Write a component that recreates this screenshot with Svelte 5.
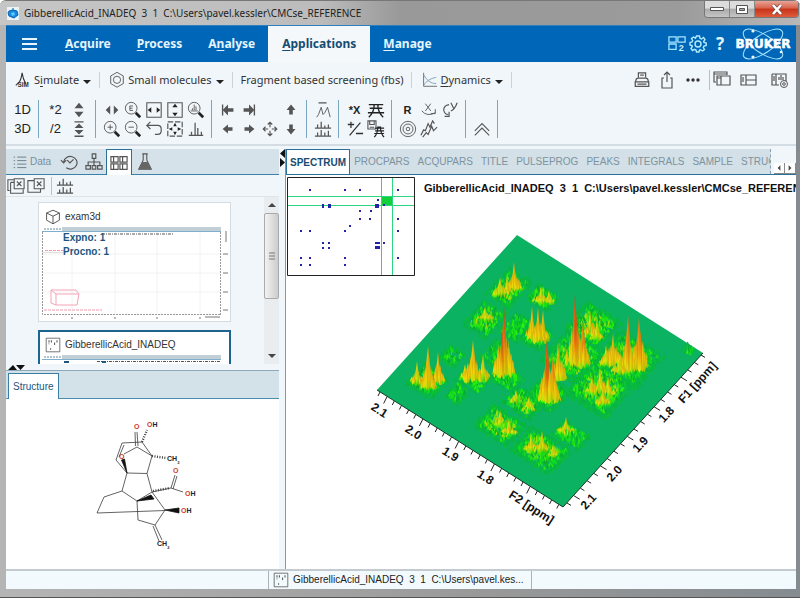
<script>
  const icons = {
    sim: '<path d="M2 16L6 12Q8 9 9 2Q10 9 13 14" stroke="#333" stroke-width="1.2"/><text x="4" y="18" font-family="Liberation Sans" font-size="7" font-weight="700" fill="#333" stroke="none">SIM</text>',
    hexagon: '<path d="M10 1.5L17 5.5V14L10 18L3 14V5.5Z"/><circle cx="10" cy="9.8" r="4"/>',
    dynamics: '<path d="M4 2V17H19" stroke="#666"/><path d="M4 4Q9 14 18 14" stroke="#7ba0b4"/><path d="M4 16Q8 9 18 7" stroke="#7ba0b4"/>',
    print: '<path d="M6 7V2H14V7M8 4.500H12M3 12Q3 8 6 8H14Q17 8 17 12M2.500 12H17.500V17H2.500ZM5 14.500H15" stroke-width="1.4"/>',
    share: '<path d="M7 8H5V18H15V8H13M10 12V2M7 5L10 2L13 5" stroke-width="1.2"/>',
    more: '<g fill="#333" stroke="none"><circle cx="5" cy="10" r="1.700"/><circle cx="10" cy="10" r="1.700"/><circle cx="15" cy="10" r="1.700"/></g>',
    windows: '<path d="M4 12H2V2H15V5M2 4H15M5 6H18V15H5ZM9 6V15M5 8H9" stroke-width="1.2"/>',
    layout: '<path d="M3 5H18V15H3ZM8 5V15M8 10H18M5 7V12" stroke-width="1.2"/>',
    layoutset: '<path d="M2 4H16V11M2 4V15H9M6 4V15M9 10V7M11 10V5M13 10V7M4 6V11" stroke-width="1.2"/><circle cx="14" cy="14" r="3.500"/><circle cx="14" cy="14" r="1.300"/>',
    updown: '<g fill="#555" stroke="none"><path d="M10 2L15 8H5ZM5 12H15L10 18Z"/></g>',
    upline: '<path d="M5 2H15M5 18H15" stroke-width="1.5"/><g fill="#555" stroke="none"><path d="M10 4L15 9H5ZM5 11H15L10 16Z"/></g>',
    leftright: '<path d="M8 5V15L3 10ZM12 5V15L17 10Z" fill="#555" stroke="none"/>',
    zoome: '<circle cx="8" cy="8" r="6.500"/><path d="M13 13L18 18" stroke="#222" stroke-width="3"/><path d="M10 5.500H6.500V10.500H10M6.500 8H9.500"/>',
    zoomin: '<circle cx="8" cy="8" r="6.500"/><path d="M13 13L18 18" stroke="#222" stroke-width="3"/><path d="M5 8H11M8 5V11"/>',
    zoomout: '<circle cx="8" cy="8" r="6.500"/><path d="M13 13L18 18" stroke="#222" stroke-width="3"/><path d="M5 8H11"/>',
    zoomspec: '<circle cx="8" cy="8" r="6.500"/><path d="M13 13L18 18" stroke="#222" stroke-width="3"/><path d="M4 11H12M6 10V8M8 10V4M10 10V6"/>',
    fitx: '<path d="M2 2H18V18H2Z" stroke-width="1.2"/><path d="M3 10L7 7V13ZM17 10L13 7V13Z" fill="#222" stroke="none"/>',
    fity: '<path d="M2 2H18V18H2Z" stroke-width="1.2"/><path d="M10 3L7 7H13ZM10 17L7 13H13Z" fill="#222" stroke="none"/>',
    fitall: '<path d="M2 2H18V18H2Z" stroke-dasharray="6 2" stroke-width="1.3"/><path d="M10 3L8 7H12ZM10 17L8 13H12ZM3 10L7 8V12ZM17 10L13 8V12Z" fill="#222" stroke="none"/>',
    undo: '<path d="M6 2L2 6L6 10M2 6H14Q18 6 18 10V12Q18 16 14 16H11" stroke-width="1.3"/>',
    baseline: '<path d="M2 17H18M5 17V13M9 17V3M12 17V9M16 17V13" stroke-width="1.4"/>',
    first: '<path d="M4 4V16" stroke-width="1.5"/><path d="M4 10L10 4V8H16V12H10V16Z" fill="#555" stroke="none"/>',
    last: '<path d="M16 4V16" stroke-width="1.5"/><path d="M16 10L10 4V8H4V12H10V16Z" fill="#555" stroke="none"/>',
    left: '<path d="M4 10L10 5V8H15V12H10V15Z" fill="#555" stroke="none"/>',
    right: '<path d="M16 10L10 5V8H5V12H10V15Z" fill="#555" stroke="none"/>',
    up: '<path d="M10 4L15 10H12V15H8V10H5Z" fill="#555" stroke="none"/>',
    down: '<path d="M10 16L15 10H12V5H8V10H5Z" fill="#555" stroke="none"/>',
    move: '<path d="M10 8V3M10 12V17M8 10H3M12 10H17M7.500 5L10 2.500L12.500 5M7.500 15L10 17.500L12.500 15M5 7.500L2.500 10L5 12.500M15 7.500L17.500 10L15 12.500" stroke-width="1.3"/>',
    peaks: '<path d="M5 2H14" stroke-width="1.400"/><path d="M3 18L5 15L8 7L10 15L12 13L15 7L18 18"/>',
    stack: '<path d="M1 9H19M1 18H19M4 9V5M8 9V2M12 9V6M16 9V5M4 18V14M8 18V11M12 18V14M16 18V12" stroke-width="1.4"/>',
    slices: '<path d="M2 4H18M3 8H17M1 13H19M2 18Q8 13 8 4H12Q12 13 18 18" stroke="#222" stroke-width="1.5"/>',
    plusminus: '<path d="M2 5H9M5.500 2V9M4 17L16 3M11 15H19" stroke-width="1.4" stroke="#333"/>',
    saveslices: '<path d="M1 1H10V10H1ZM3 1V5H8V1M3 8H8" stroke-width="1.2"/><path d="M9 9H19M9 12H19M8 15H19M8 19Q12 15 12 8H15Q15 15 19 19" stroke="#222" stroke-width="1.3"/>',
    rotx: '<path d="M6 3L12 11M12 3L6 11M2 11Q8 18 17 13M17 9V14H12"/>',
    roty: '<path d="M9 4Q3 5 3 10Q4 15 8 15M4 17H9V12M11 2L14 8M18 2Q15 10 11 11" stroke-width="1.3"/>',
    contour: '<circle cx="10" cy="10" r="8.500"/><circle cx="10" cy="10" r="5.500"/><circle cx="10" cy="10" r="2"/>',
    fids: '<path d="M1 17L4 11L6 12L9 4L11 8L14 1L16 4M3 19L7 14L9 16L13 7L15 12L19 8" stroke-width="1.3"/>',
    collapse: '<path d="M2 12L10 4L18 12M2 17L10 9L18 17" stroke-width="1.2"/>',
    list: '<path d="M1 3H3M1 8H3M1 13H3M1 18H3M6 3H19M6 8H19M6 13H19M6 18H19" stroke="#6f7f88" stroke-width="1.4"/>',
    history: '<path d="M4 10A7.500 7 0 1 1 7 16.500M1 8L4 11L7 8M8 8L11 11L15 7" stroke-width="1.3"/>',
    tree: '<path d="M8 1H12V6H8ZM1 14H6V18H1ZM8 14H12V18H8ZM14 14H19V18H14ZM10 6V14M3.500 14V10H16.500V14" stroke-width="1.3"/>',
    tiles: '<path d="M1 3H9V9H1ZM11 3H19V9H11ZM1 11H9V17H1ZM11 11H19V17H11ZM4 3V9M14 3V9M4 11V17M14 11V17" stroke-width="1.3"/>',
    flask: '<path d="M7 1H13M8 1V8L3 18H17L12 8V1" stroke-width="1.2"/><path d="M7 10H13L17 18H3Z" fill="#666" stroke="none"/>',
    closeall: '<path d="M3 15H1V3H8M4 6V18H18V14M4 6H8M8 2H19V13H8ZM11 5L16 10M16 5L11 10" stroke-width="1.2"/>',
    closeone: '<path d="M8 4H1V17H15V13M8 2H19V13H8ZM11 5L16 10M16 5L11 10" stroke-width="1.2"/>',
    cube: '<path d="M10 1.500L18 5V14L10 18.500L2 14V5ZM2 5L10 9L18 5M10 9V18.500" stroke-width="1.2"/>',
    dots: '<path d="M1.500 1.500H18.500V18.500H1.500Z"/><path d="M5 4V9M8 4V8M12 7V11M15 4V8M7 14V16" stroke-width="1.3" stroke-dasharray="3 1"/>',
    grid2: '<path d="M1 2H9V8H1ZM11 2H19V8H11ZM1 10H9V16H1Z" stroke="#a5e6ff" stroke-width="1.4"/><text x="12" y="18" font-family="Liberation Sans" font-size="10" font-weight="700" fill="#c8efff" stroke="none">2</text>',
    gear: '<circle cx="10" cy="10" r="3" stroke="#b5ecff" stroke-width="1.4"/><path d="M8.500 2H11.500L12 4.300L13.500 5L15.500 3.500L17 5.500L15.600 7.500L16 8.500L18.200 9V11.500L16 12L15.300 13.500L16.500 15.500L14.500 17L12.500 15.700L11.500 16L11 18H8.500L8 16L6.500 15.300L4.500 16.500L3 14.500L4.300 12.500L4 11.500L2 11V8.500L4 8L4.700 6.500L3.500 4.500L5.500 3L7.500 4.300Z" stroke="#b5ecff" stroke-width="1.4"/>'
  };

  const menus = [['A', 'cquire', ''], ['P', 'rocess', ''], ['n', 'alyse', 'A'], ['A', 'pplications', ''], ['M', 'anage', '']];

  const groups = [
    [['t', '1D'], ['t', '3D']],
    [['t', '*2'], ['t', '/2'], ['i', 'updown'], ['i', 'upline']],
    ['leftright', 'zoomin', 'zoome', 'zoomout', 'fitx', 'undo', 'fity', 'fitall', 'zoomspec', 'baseline'].map((n) => ['i', n]),
    ['first', 'left', 'last', 'right', '', 'move', 'up', 'down'].map((n) => ['i', n]),
    [['i', 'peaks'], ['i', 'stack']],
    [['b', '*X'], ['i', 'plusminus'], ['i', 'slices'], ['i', 'saveslices']],
    [['b', 'R'], ['i', 'contour'], ['i', 'rotx'], ['i', 'fids'], ['i', 'roty']],
    [['i', ''], ['i', 'collapse']]
  ];

  const tabs = ['SPECTRUM', 'PROCPARS', 'ACQUPARS', 'TITLE', 'PULSEPROG', 'PEAKS', 'INTEGRALS', 'SAMPLE', 'STRUCTURE'];
  let active = $state('SPECTRUM');

  const mapDots = [
    [22, 12], [57, 12], [72, 12], [110, 12], [90, 22], [96, 27], [72, 33], [83, 33], [72, 41], [82, 41],
    [110, 41], [62, 48], [13, 53], [22, 53], [57, 53], [110, 53], [35, 65], [41, 65], [96, 65], [35, 70],
    [41, 70], [13, 80], [22, 80], [57, 80], [110, 80], [13, 87], [22, 87], [57, 87]
  ];

  let seed = 7;
  const rnd = () => {
    seed = (seed * 16807) % 2147483647;
    return seed / 2147483647;
  };

  // noise patches: centre x, centre y, half extent along F2, half extent along F1, lightness
  const patches = [
    [509, 287, 14, 18, 1], [543, 296, 13, 10, 1], [485, 318, 14, 17, 1], [516, 326, 11, 14, 0], [537, 335, 12, 12, 0],
    [428, 380, 15, 14, 0], [474, 377, 14, 12, 0], [452, 355, 9, 9, 0], [458, 392, 8, 10, 0], [496, 352, 10, 13, 0],
    [507, 377, 14, 10, 0], [592, 325, 20, 20, 1], [574, 356, 24, 22, 1], [628, 358, 26, 23, 1], [600, 387, 25, 24, 1],
    [548, 392, 16, 16, 0], [523, 401, 17, 12, 1], [500, 424, 20, 15, 1], [541, 449, 24, 17, 1], [571, 434, 16, 10, 0],
    [689, 348, 5, 4, 0]
  ];
  // signal clusters: x, tip y, base y, half width
  const signals = [
    [514, 262, 291, 7], [500, 277, 296, 9], [507, 277, 294, 6], [541, 286, 303, 8], [549, 290, 303, 5], [485, 306, 321, 8],
    [504, 307, 377, 10], [532, 306, 340, 6], [538, 307, 343, 7], [543, 310, 340, 5], [575, 294, 366, 9], [583, 322, 366, 7],
    [590, 311, 336, 6], [597, 319, 340, 6], [417, 361, 384, 6], [428, 346, 389, 7], [438, 352, 383, 6], [473, 340, 382, 9],
    [483, 354, 380, 6], [465, 364, 378, 5], [558, 342, 379, 8], [547, 337, 402, 8], [553, 355, 402, 6], [613, 333, 366, 12],
    [606, 345, 366, 7], [628, 315, 372, 7], [639, 317, 370, 9], [620, 352, 374, 8], [600, 368, 392, 8], [592, 376, 394, 7],
    [608, 376, 396, 7], [603, 386, 405, 7], [516, 390, 402, 6], [529, 396, 410, 6], [500, 410, 425, 7], [509, 418, 434, 8],
    [531, 433, 451, 7], [542, 431, 452, 8], [553, 444, 456, 6], [566, 417, 434, 9]
  ];

  const spikes = [];
  for (const [cx, cy, a, b, light] of patches) {
    for (let i = 0; i < a * b * 1.1; i++) {
      const u = (rnd() * 2 - 1) * a;
      const v = (rnd() * 2 - 1) * b;
      const edge = Math.max(Math.abs(u) / a, Math.abs(v) / b);
      const g = edge > 0.8 ? ['#09b444', '#0abd3a'] : light && edge < 0.6 ? ['#16dc18', '#6be712', '#37e510', '#0fa928', '#a0dd10', '#12c41c'] : ['#0ac732', '#12dd1c', '#0aac32', '#2cef0c'];
      spikes.push({ x: cx + u * 0.85 - v * 0.67, y: cy + u * 0.54 + v * 0.74 + 3, h: 3 + rnd() * 4 * (1.3 - edge), w: 1 + rnd() * 1.2, f: g[Math.floor(rnd() * g.length)] });
    }
  }
  for (const [cx, top, base, w] of signals) {
    const h = base - top;
    const tone = h > 58 ? 'url(#hot)' : h > 43 ? 'url(#warm)' : h > 28 ? 'url(#mid)' : 'url(#low)';
    for (let i = 0; i < w * 3; i++) {
      const d = rnd() * 2 - 1;
      const k = Math.pow(1 - Math.abs(d), 1.1) * (0.6 + rnd() * 0.4) * 0.65 + 0.2;
      spikes.push({ x: cx + d * w, y: base - Math.abs(d) * 2 + rnd() * 3, h: h * k, w: 1.5 + rnd() * 1.3, f: k > 0.6 ? tone : h * k > 9 ? 'url(#mid)' : 'url(#low)', s: 1 });
    }
    spikes.push({ x: cx, y: base, h, w: h > 40 ? 4.5 : 3, f: tone, s: 1 });
  }
  spikes.sort((p, q) => p.y - q.y);

  const f2Ticks = Array.from({ length: 26 }, (_, i) => ({ x: 380 + i * 7.15, y: 392 + i * 4.5, l: i % 5 === 1 ? 7 : 4 }));
  const f1Ticks = Array.from({ length: 21 }, (_, i) => ({ x: 567 + i * 6.7, y: 503 - i * 7.4, l: i % 4 === 1 ? 6 : 4 }));
  const axisLabels = [
    [379, 411, 33, '2.1'], [413, 433, 33, '2.0'], [450, 455, 33, '1.9'], [485, 478, 33, '1.8'], [531, 508, 33, 'F2 [ppm]'],
    [589, 502, -48, '2.1'], [615, 474, -48, '2.0'], [641, 445, -48, '1.9'], [667, 415, -48, '1.8'], [698, 383, -48, 'F1 [ppm]']
  ];
</script>

{#snippet icon(name, size = 20)}
  <svg class="icon" width={size} height={size} viewBox="0 0 20 20" fill="none" stroke="#555" aria-hidden="true">{@html icons[name] ?? ''}</svg>
{/snippet}

<div class="window">
  <header class="titlebar">
    <svg width="12" height="13" viewBox="0 0 12 13" aria-hidden="true"><path d="M0 0H12V13H0Z" fill="#e9f3fa"/><path d="M6 1V4M2 4L6 3L10 4L11 8L7 11L2 9L1 6Z" fill="#168be0" stroke="#0b63ac"/><path d="M4 6L7 5L8 8L5 9Z" fill="#60c8ff"/></svg>
    <span class="caption">GibberellicAcid_INADEQ&nbsp; 3&nbsp; 1&nbsp; C:\Users\pavel.kessler\CMCse_REFERENCE</span>
    <div class="winbtns">
      <button aria-label="Minimize"><svg width="14" height="6" viewBox="0 0 14 6"><path d="M.5 1.500H13.500V4.500H.5Z" fill="#fff" stroke="#555"/></svg></button>
      <button aria-label="Maximize"><svg width="14" height="11" viewBox="0 0 14 11"><path d="M1.500 1.500H12.500V9.500H1.500Z" fill="#fff" stroke="#555"/><path d="M4.500 4.500H9.500V6.500H4.500Z" fill="#aaa" stroke="#555"/></svg></button>
      <button class="close" aria-label="Close"><svg width="12" height="11" viewBox="0 0 12 11"><path d="M2 1L10 10M10 1L2 10" stroke="#7b4a45" stroke-width="4"/><path d="M2 1L10 10M10 1L2 10" stroke="#fff" stroke-width="2.600"/></svg></button>
    </div>
  </header>

  <div class="app">
    <nav class="menubar">
      <button class="burger" aria-label="Menu"><svg width="16" height="14" viewBox="0 0 16 14"><path d="M0 2H15M0 7H15M0 12H15" stroke="#e8f6ff" stroke-width="2"/></svg></button>
      {#each menus as [key, rest, lead], i}
        {#if lead}
          <button>{lead}<u>{key}</u>{rest}</button>
        {:else}
          <button class:on={i === 3}><u>{key}</u>{rest}</button>
        {/if}
      {/each}
      <div class="tools">
        <button aria-label="Arrange windows">{@render icon('grid2', 18)}</button>
        <button aria-label="Settings">{@render icon('gear')}</button>
        <button class="help" aria-label="Help">?</button>
        <svg width="62" height="34" viewBox="0 0 62 34" fill="none" stroke="#a9e4ff" role="img" aria-label="Bruker">
          <ellipse cx="31" cy="17" rx="23" ry="9" transform="rotate(34 31 17)"/>
          <ellipse cx="31" cy="17" rx="23" ry="9" transform="rotate(-34 31 17)"/>
          <g fill="#e6f7ff" stroke="none"><circle cx="21" cy="4" r="1.600"/><circle cx="21" cy="30" r="1.600"/><circle cx="49" cy="25" r="1.300"/></g>
          <text x="31" y="21" text-anchor="middle" font-family="DejaVu Sans" font-size="12" font-weight="700" fill="#fff" stroke="#fff" stroke-width=".5">BRUKER</text>
        </svg>
      </div>
    </nav>

    <div class="ribbon">
      <button class="rb">{@render icon('sim', 18)}<span>S<u>i</u>mulate</span><i class="caret"></i></button>
      <button class="rb">{@render icon('hexagon', 18)}<span>Small molecules</span><i class="caret"></i></button>
      <button class="rb">Fragment based screening (fbs)</button>
      <button class="rb">{@render icon('dynamics', 18)}<span><u>D</u>ynamics</span><i class="caret"></i></button>
      <div class="rtools">
        <button aria-label="Print">{@render icon('print', 18)}</button>
        <button aria-label="Export">{@render icon('share')}</button>
        <button aria-label="More">{@render icon('more')}</button>
        <button class="split" aria-label="Windows">{@render icon('windows')}</button>
        <button aria-label="Layout">{@render icon('layout')}</button>
        <button class="last" aria-label="Layout settings">{@render icon('layoutset')}</button>
      </div>
    </div>

    <div class="toolbar">
      {#each groups as g, gi}
        <div class="group" class:wide={gi === 1}>
          {#each g as [kind, v]}
            {#if v === ''}
              <span></span>
            {:else if kind === 'i'}
              <button aria-label={v}>{@render icon(v)}</button>
            {:else}
              <button class:bold={kind === 'b'}>{v}</button>
            {/if}
          {/each}
        </div>
      {/each}
    </div>

    <div class="body">
      <aside>
        <div class="sidetabs">
          <button class="data">{@render icon('list', 14)}Data</button>
          <button aria-label="History">{@render icon('history', 18)}</button>
          <button aria-label="Groups">{@render icon('tree', 18)}</button>
          <button class="on" aria-label="Datasets">{@render icon('tiles', 18)}</button>
          <button aria-label="Samples">{@render icon('flask', 18)}</button>
        </div>
        <div class="sidetools">
          <button aria-label="Close all">{@render icon('closeall', 18)}</button>
          <button aria-label="Close">{@render icon('closeone', 18)}</button>
          <button class="split" aria-label="Stack spectra">{@render icon('stack', 18)}</button>
        </div>
        <div class="browser">
          <div class="cards">
            <article class="card">
              <h2>{@render icon('cube', 16)}exam3d</h2>
              <svg width="100%" viewBox="0 0 188 92" fill="none" aria-label="exam3d preview">
                <path d="M0 0H179V4H0Z" fill="#c3cfd6"/><path d="M0 0H20V4H0Z" fill="#fff"/>
                <path d="M2 2H19" stroke="#6b8797" stroke-dasharray="2 1"/>
                <path d="M0 4.500H179" stroke="#7eb0ce"/>
                <path d="M30 5V87M73 5V87M115 5V87M158 5V87M0 27H178M0 46H178M0 65H178" stroke="#f2f2f4"/>
                <path d="M178.500 5V88M.5 5V87.500H179" stroke="#999" stroke-dasharray="2 1"/>
                <path d="M60 7H131" stroke="#555" stroke-dasharray="3 1 1 1"/>
                <path d="M3 23.500H22M2 83H60" stroke="#f09aaa" stroke-dasharray="3 1"/>
                <path d="M0 25.500H24" stroke="#e0e0e0"/>
                <path d="M9 63L14 67V78H35L37 67L34 63ZM9 63V76L14 78M14 67H37" stroke="#f5a3b3"/>
                <path d="M181 27H186M181 46H186M181 65H186M181 83H186M29 91H31M72 91H74M114 91H116M157 91H159M163 90H178M184 4V15" stroke="#777"/>
                <text x="21" y="14">Expno: 1</text>
                <text x="21" y="28">Procno: 1</text>
              </svg>
            </article>
            <article class="card on">
              <h2>{@render icon('dots', 16)}GibberellicAcid_INADEQ</h2>
              <svg width="100%" viewBox="0 0 188 92" fill="none" aria-label="GibberellicAcid_INADEQ preview">
                <path d="M0 0H179V4H0Z" fill="#c3cfd6"/><path d="M0 0H20V4H0Z" fill="#fff"/>
                <path d="M2 2H19" stroke="#6b8797" stroke-dasharray="2 1"/>
                <path d="M0 4.500H179" stroke="#7eb0ce"/>
                <path d="M55 6.500H178" stroke="#555" stroke-dasharray="3 1 1 1"/>
                <path d="M22 7H27M60 7H64" stroke="#1c5680" stroke-width="2"/>
              </svg>
            </article>
          </div>
          <div class="scroll">
            <button aria-label="Scroll up"><i class="tri up"></i></button>
            <div class="thumb"><svg width="6" height="8" viewBox="0 0 6 8"><path d="M0 1H6M0 4H6M0 7H6" stroke="#777"/></svg></div>
            <button class="end" aria-label="Scroll down"><i class="tri"></i></button>
          </div>
        </div>
        <div class="hsplit"><svg width="18" height="5" viewBox="0 0 18 5"><path d="M0 5L5 0L9 5ZM8 0H17L12.500 5Z" fill="#111"/></svg></div>
        <div class="structtabs"><button>Structure</button></div>
        <div class="structure">
          <svg viewBox="80 400 140 160" width="140" height="160" fill="none" stroke="#3c3c3c" stroke-width=".8" role="img" aria-label="Gibberellic acid structure">
            <path d="M138 447L137 433M135.500 447L135 433M137 448L124 455M137 448L152 457M152 457L142 443L122 444L116 461L127 474L147 474.500L152 457M124 446L119 458M147 474.500L152 493M127 474L122 492L137 502L152 493L171 489M122 492L104 498L97 514L165 511.500M152 493L165 511L155 526L138 521L137 502M155 526L162 541M153 527L159 542M171 489L175 476M173 490L177 477M171 489L183 493"/>
            <path d="M127 474L121.500 461L124.500 460Z M137 502L151 496L154 500ZM165 511L179 509V514Z" fill="#111" stroke="#111"/>
            <path d="M142 443L147 431M152 457L166 459M153 492L170 489" stroke-dasharray="1 1.500" stroke-width="2.400"/>
            <g font-family="Liberation Sans" font-size="7" font-weight="700" fill="#222" stroke="none">
              <text x="134" y="430" class="o">O</text><text x="147" y="428"><tspan class="o">O</tspan>H</text>
              <text x="119" y="460" class="o">O</text><text x="167" y="462">CH<tspan dy="3" font-size="4">3</tspan></text>
              <text x="173" y="474" class="o">O</text><text x="185" y="497"><tspan class="o">O</tspan>H</text>
              <text x="181" y="514"><tspan class="o">O</tspan>H</text><text x="157" y="547">CH<tspan dy="3" font-size="4">2</tspan></text>
            </g>
          </svg>
        </div>
      </aside>

      <div class="vsplit"><svg width="5" height="18" viewBox="0 0 5 18"><path d="M5 0V9L0 4.500ZM0 9V18L5 13.500Z" fill="#111"/></svg></div>

      <main>
        <div class="tabbar">
          <div class="tabs">
            {#each tabs as t}
              <button class:on={active === t} onclick={() => (active = t)}>{t}</button>
            {/each}
          </div>
          <div class="tabnav"><button aria-label="Previous tabs"><i class="tri l"></i></button><button aria-label="Next tabs"><i class="tri r"></i></button></div>
        </div>
        <div class="plot">
          <svg class="surface" viewBox="286 175 510 392" width="510" height="392" role="img" aria-label="3D spectrum surface">
            <defs>
              <linearGradient id="hot" x2="0" y2="1"><stop offset="0" stop-color="#c24a1c"/><stop offset=".45" stop-color="#ef7012"/><stop offset=".7" stop-color="#f0b00c"/><stop offset="1" stop-color="#d5ec08"/></linearGradient>
              <linearGradient id="warm" x2="0" y2="1"><stop offset="0" stop-color="#dc7a14"/><stop offset=".5" stop-color="#f0a010"/><stop offset="1" stop-color="#e4ee0a"/></linearGradient>
              <linearGradient id="mid" x2="0" y2="1"><stop offset="0" stop-color="#e2b014"/><stop offset=".6" stop-color="#f2d408"/><stop offset="1" stop-color="#a8ea0c"/></linearGradient>
              <linearGradient id="low" x2="0" y2="1"><stop offset="0" stop-color="#d8cb1a"/><stop offset=".5" stop-color="#ceec0c"/><stop offset="1" stop-color="#30e410"/></linearGradient>
            </defs>
            <path d="M517 235L703 353L563 507L377 390Z" fill="#0bb261"/>
            {#each spikes as s}
              <path d="M{s.x - s.w} {s.y}L{s.x} {s.y - s.h}L{s.x + s.w} {s.y}Z" fill={s.f} />
              {#if s.s}<path d="M{s.x} {s.y - s.h}L{s.x + s.w} {s.y}H{s.x + s.w * 0.2}Z" fill="#8c5a00" opacity=".25" />{/if}
            {/each}
            <path d="M377 390L563 507L703 353" fill="none" stroke="#143c28"/>
            {#each f2Ticks as t}<path d="M{t.x} {t.y}l{-t.l * 0.5} {t.l}" stroke="#222" />{/each}
            {#each f1Ticks as t}<path d="M{t.x} {t.y}l{t.l} {t.l * 0.6}" stroke="#222" />{/each}
            {#each axisLabels as [x, y, r, t]}
              <text class="axis" transform="translate({x} {y}) rotate({r})">{t}</text>
            {/each}
          </svg>
          <div class="plothead">
            <svg class="map" width="128" height="99" viewBox="0 0 128 99" aria-label="Overview map">
              <path d="M.5.500H127.500V98.500H.5Z" fill="#fff" stroke="#222"/>
              <path d="M1 19.500H127M1 28.500H127M94.500 1V98M105.500 1V98" stroke="#2ed682"/>
              <path d="M95 20H105V28H95Z" fill="#12cf3e"/>
              {#each mapDots as [x, y]}<path d="M{x} {y}h2v2h-2z" fill="#2323a8" />{/each}
              <path d="M35 27h2v4h-2zM41 27h3v4h-3zM88 27h4v4h-4zM88 65h5v2h-5zM88 69h5v3h-5z" fill="#2323a8"/>
            </svg>
            <h1>GibberellicAcid_INADEQ&nbsp; 3&nbsp; 1&nbsp; C:\Users\pavel.kessler\CMCse_REFERENCE</h1>
          </div>
        </div>
      </main>
    </div>

    <footer>
      <button>{@render icon('dots', 16)}<span>GibberellicAcid_INADEQ&nbsp; 3&nbsp; 1&nbsp; C:\Users\pavel.kes...</span></button>
    </footer>
  </div>
</div>

<style>
  :global(body) { margin: 0; }
  .window, .window * { box-sizing: border-box; }
  .window { min-height: 100vh; display: flex; flex-direction: column; padding: 0 4px 8px 6px; background: linear-gradient(90deg, #b5b5b5, #999 60%, #858b90); font: 10px/14px "Liberation Sans", Arial, sans-serif; color: #333; border-radius: 6px 6px 0 0; overflow: hidden; border-top: 1px solid #777; border-bottom: 1px solid #555; }
  button { border: 0; padding: 0; margin: 0; background: none; font: inherit; color: inherit; display: flex; align-items: center; justify-content: center; white-space: nowrap; flex: none; }
  svg { display: block; flex: none; }

  .titlebar { height: 24px; display: flex; align-items: center; gap: 5px; background: linear-gradient(90deg, #c6c6c6, #bcbcbc 40%, #999 50%, #9b9b9b 85%, #b8b8b8); margin: 0 -4px 0 -6px; padding: 0 1px 0 7px; }
  .caption { flex: 1; font: 10px/16px "Noto Sans", sans-serif; color: #222; white-space: nowrap; overflow: hidden; }
  .winbtns { display: flex; align-self: flex-start; border: 1px solid #777; border-top: 0; border-radius: 0 0 4px 4px; overflow: hidden; }
  .winbtns button { width: 25px; height: 16px; background: linear-gradient(#dcdcdc 45%, #aaa 50%, #c5c5c5); border-right: 1px solid #888; }
  .winbtns .close { width: 43px; border: 0; background: linear-gradient(#e6a595, #d9604a 45%, #c8331a 50%, #e05c3a); }

  .app { flex: 1; display: flex; flex-direction: column; background: #f1f6fa; min-width: 0; }
  .menubar { height: 37px; background: #0067b8; display: flex; align-items: stretch; color: #e4f5fe; font: 700 12px/18px "Noto Sans", sans-serif; border-top: 1px solid #2c7fc0; }
  .menubar > button { padding: 0 13px; }
  .menubar > .burger { padding: 0 14px 0 16px; }
  .menubar > .on { background: #f4f8fb; color: #174c72; padding: 0 14px; }
  u { text-underline-offset: 2px; text-decoration-thickness: 1px; }
  .tools { margin-left: auto; display: flex; align-items: center; gap: 2px; padding-right: 2px; }
  .help { width: 20px; font-size: 17px; }

  .ribbon { height: 36px; display: flex; align-items: center; padding: 0 6px 0 8px; font: 11px/18px "Noto Sans", sans-serif; }
  .rb { gap: 2px; padding-right: 8px; margin-right: 8px; border-right: 1px solid #ccd3d8; height: 16px; }
  .caret { border: 4px solid transparent; border-top-color: #222; border-bottom: 0; margin: 4px 0 0 2px; }
  .rtools { margin-left: auto; display: flex; align-items: center; gap: 6px; }
  .rtools .split { border-left: 1px solid #bbb; padding-left: 2px; }
  .rtools .last { margin-left: 6px; }

  .toolbar { height: 46px; display: flex; align-items: flex-start; padding: 2px 1px 0; font-size: 13px; color: #222; }
  .group { display: grid; grid-auto-flow: column; grid-template-rows: 19px 19px; grid-auto-columns: 21px; height: 38px; padding: 0 5px; border-right: 1px solid #7ba6c0; }
  .wide { grid-auto-columns: 23px; }
  .bold { font-weight: 700; font-size: 11px; }
  .toolbar svg { width: 18px; height: 18px; }

  .body { flex: 1; display: flex; border-top: 2px solid #d3dde3; padding-top: 3px; min-height: 0; }
  aside { width: 273px; flex: none; display: flex; flex-direction: column; }
  .sidetabs { height: 26px; display: flex; background: #d6e2e9; border-bottom: 1px solid #3b80a6; padding-left: 6px; }
  .sidetabs button { width: 25px; height: 26px; }
  .sidetabs .data { width: 40px; gap: 3px; color: #788e9b; margin-right: 4px; }
  .sidetabs .on { background: #fff; border: 1px solid #2a7199; border-bottom: 0; width: 26px; }
  .sidetools { height: 22px; display: flex; align-items: center; gap: 2px; padding-left: 1px; border-bottom: 1px solid #dde5ea; }
  .sidetools .split { border-left: 1px solid #b6c3cb; margin-left: 4px; padding-left: 4px; }
  .browser { height: 167px; display: flex; overflow: hidden; }
  .cards { flex: 1; padding: 5px 33px 0 32px; display: flex; flex-direction: column; gap: 8px; }
  .card { background: #fff; border: 1px solid #d5dbe0; padding: 3px 0 0 3px; flex: none; height: 120px; }
  .card.on { border: 1px solid #1d6490; outline: 1px solid #1d6490; outline-offset: -2px; }
  h2 { margin: 0; font: 10px/20px "Liberation Sans", Arial, sans-serif; display: flex; align-items: center; gap: 4px; padding-left: 3px; height: 21px; }
  .card text { font: 700 10px "Liberation Sans", Arial, sans-serif; fill: #1c5680; }
  .scroll { width: 15px; display: flex; flex-direction: column; background: #e9edf0; }
  .scroll button { width: 15px; height: 16px; }
  .thumb { height: 86px; border: 1px solid #aaa; border-radius: 2px; background: linear-gradient(90deg, #f2f2f2, #ccc); display: flex; align-items: center; justify-content: center; }
  .scroll .end { margin-top: auto; }
  .tri { border: 4px solid transparent; border-top-color: #444; border-bottom: 0; }
  .tri.up { transform: rotate(180deg); }
  .tri.l { transform: rotate(90deg) scale(.7); }
  .tri.r { transform: rotate(-90deg) scale(.7); }
  .hsplit { height: 7px; padding: 1px 2px; border-bottom: 1px solid #8da9b9; }
  .structtabs { height: 28px; background: #d3e1e9; border-bottom: 1px solid #4b8dae; padding: 2px 2px 0; }
  .structtabs button { height: 26px; padding: 0 4px; background: #fff; border: 1px solid #3b7fa5; border-bottom: 0; color: #1c5680; }
  .structure { flex: 1; background: #fff; display: flex; justify-content: center; padding-left: 14px; }
  .o { fill: #cc3a30; }
  .vsplit { width: 7px; flex: none; background: #f1f6fa; border-right: 1px solid #8b979f; padding-left: 1px; }

  main { flex: 1; min-width: 0; display: flex; flex-direction: column; background: #fff; }
  .tabbar { height: 26px; display: flex; background: #f1f6fa; border-bottom: 1px solid #2a7199; }
  .tabs { flex: 1; display: flex; min-width: 0; overflow: hidden; background: #d3e0e7; color: #7c939f; height: 25px; border-right: 1px dashed #8aa0ad; }
  .tabs button { padding: 0 4px; height: 26px; }
  .tabs .on { background: #fff; border: 1px solid #2a7199; border-bottom: 0; color: #174c72; font-weight: 700; padding: 0 3px; }
  .tabnav { width: 25px; display: flex; align-items: flex-end; justify-content: flex-end; }
  .tabnav button { width: 11px; height: 11px; border-right: 1px solid #888; border-bottom: 1px solid #888; background: #fff; }
  .plot { flex: 1; display: grid; overflow: hidden; grid-template-columns: minmax(0, 1fr); }
  .surface, .plothead { grid-area: 1 / 1; }
  .plothead { display: flex; gap: 9px; padding: 2px 0 0 1px; height: 102px; overflow: hidden; }
  h1 { margin: 0; padding-top: 4px; font: 700 11px/14px "Liberation Sans", Arial, sans-serif; color: #111; white-space: nowrap; }
  .axis { font: 700 12px "Liberation Sans", Arial, sans-serif; fill: #111; text-anchor: middle; dominant-baseline: middle; }

  footer { height: 20px; display: flex; border-top: 2px solid #c3cbd0; background: #f3fafd; padding-left: 262px; }
  footer button { width: 264px; gap: 4px; justify-content: flex-start; padding-left: 4px; border: solid #aab4ba; border-width: 0 1px; color: #222; }
</style>
